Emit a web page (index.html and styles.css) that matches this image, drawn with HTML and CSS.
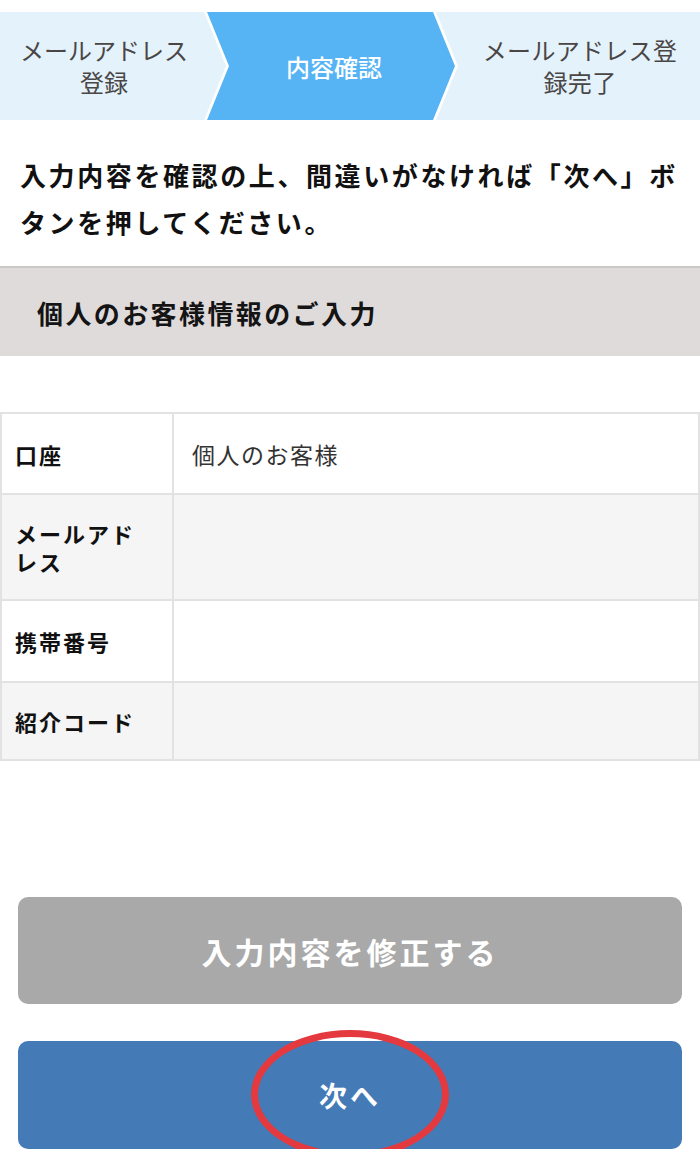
FILE: index.html
```html
<!DOCTYPE html>
<html lang="ja">
<head>
<meta charset="utf-8">
<link rel="stylesheet" href="styles.css">
</head>
<body>
<nav class="stepper">
  <div class="step step-first">メールアドレス<br>登録</div>
  <div class="step-active"><div class="step-active-inner">内容確認</div></div>
  <div class="step step-last">メールアドレス登<br>録完了</div>
</nav>

<p class="lead">入力内容を確認の上、間違いがなければ「次へ」ボタンを押してください。</p>

<h2 class="section-title">個人のお客様情報のご入力</h2>

<table class="confirm">
  <tr class="r1"><th>口座</th><td>個人のお客様</td></tr>
  <tr class="alt r2"><th>メールアドレス</th><td></td></tr>
  <tr class="r3"><th>携帯番号</th><td></td></tr>
  <tr class="alt r4"><th>紹介コード</th><td></td></tr>
</table>

<div class="actions">
  <button class="btn btn-back">入力内容を修正する</button>
  <div class="next-wrap">
    <button class="btn btn-next">次へ</button>
    <span class="mark"></span>
  </div>
</div>
</body>
</html>
```

FILE: styles.css
```css
* { box-sizing: border-box; }
html, body { margin: 0; padding: 0; background: #fff; }
body {
  width: 700px;
  font-family: "Noto Sans CJK JP", "Noto Sans", sans-serif;
  color: #111;
}

.stepper {
  margin-top: 12px;
  height: 108px;
  display: flex;
  background: #e3f2fb;
}
.step {
  display: flex;
  align-items: center;
  justify-content: center;
  text-align: center;
  font-size: 24px;
  line-height: 32px;
  color: #4a4646;
  font-weight: 400;
}
.step-first { width: 204px; padding-left: 4px; }
.step-last { flex: 1; padding-left: 2px; letter-spacing: 0.3px; }
.step-active {
  width: 254px;
  height: 108px;
  background: #fff;
  clip-path: polygon(0 0, 232px 0, 254px 50%, 232px 100%, 0 100%, 22px 50%);
}
.step-active-inner {
  height: 100%;
  background: #56b4f5;
  clip-path: polygon(3px 0, 229px 0, 251px 50%, 229px 100%, 3px 100%, 25px 50%);
  display: flex;
  align-items: center;
  justify-content: center;
  padding-left: 6px;
  color: #fff;
  font-size: 24px;
  font-weight: 500;
}

.lead {
  margin: 0;
  padding: 31px 20px 0 20px;
  font-size: 26px;
  line-height: 47px;
  font-weight: 700;
  letter-spacing: 2.6px;
  color: #111;
}

.section-title {
  margin: 21px 0 0 0;
  height: 90px;
  border-top: 2px solid #cbc7c7;
  background: #dfdbdb;
  padding-left: 37px;
  display: flex;
  align-items: center;
  font-size: 26px;
  font-weight: 700;
  letter-spacing: 2.4px;
  color: #141414;
}

.confirm {
  margin-top: 56px;
  width: 700px;
  border-collapse: collapse;
  table-layout: fixed;
}
.confirm th, .confirm td {
  border: 2px solid #e2e2e2;
  vertical-align: middle;
  line-height: 28px;
  padding: 0 20px 0 14px;
}
.confirm th {
  width: 172px;
  text-align: left;
  font-size: 22px;
  font-weight: 700;
  letter-spacing: 2px;
  color: #111;
  padding-left: 13px;
}
.confirm td {
  padding-left: 18px;
  font-size: 23px;
  font-weight: 400;
  letter-spacing: 1.5px;
  color: #333;
}
.confirm tr.alt th, .confirm tr.alt td { background: #f5f5f5; }
.confirm tr.r1 th, .confirm tr.r1 td { height: 81px; }
.confirm tr.r2 th, .confirm tr.r2 td { height: 106px; }
.confirm tr.r3 th, .confirm tr.r3 td { height: 82px; }
.confirm tr.r4 th, .confirm tr.r4 td { height: 78px; }

.actions {
  margin-top: 136px;
  padding: 0 18px;
  display: flex;
  flex-direction: column;
  gap: 37px;
}
.btn {
  display: block;
  width: 100%;
  border: none;
  border-radius: 10px;
  color: #fff;
  font-family: inherit;
  font-weight: 700;
  text-align: center;
}
.btn-back {
  height: 107px;
  background: #a9a9a9;
  font-size: 30px;
  letter-spacing: 3px;
}
.next-wrap { position: relative; }
.btn-next {
  height: 108px;
  background: #447bb7;
  font-size: 28px;
  letter-spacing: 3px;
}
.mark {
  position: absolute;
  left: 233px;
  top: -11px;
  width: 198px;
  height: 129px;
  border: 7px solid #e3393f;
  border-radius: 50%;
  pointer-events: none;
}
```
